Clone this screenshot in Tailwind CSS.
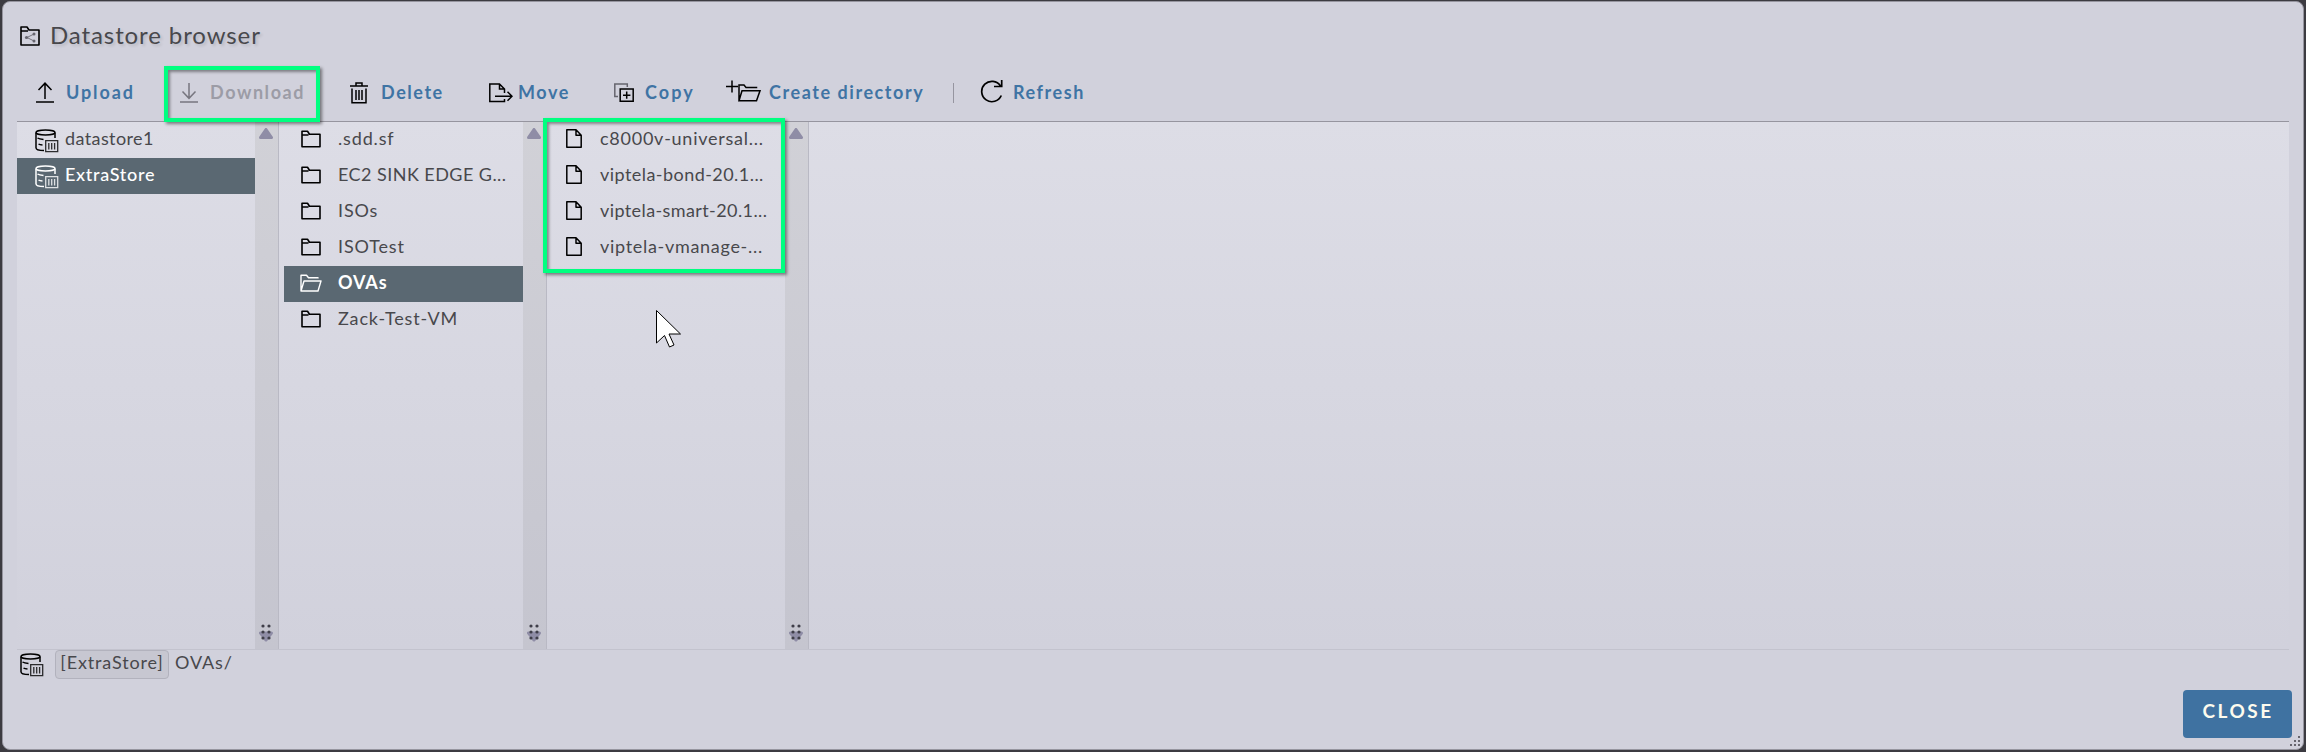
<!DOCTYPE html>
<html lang="en">
<head>
<meta charset="utf-8">
<title>Datastore browser</title>
<script src="https://cdn.jsdelivr.net/npm/@tailwindcss/browser@4"></script>
</head>
<body class="h-[752px] w-[2306px] overflow-hidden bg-[#3c3b41] font-['Lato','Noto_Sans',sans-serif] text-[18px] text-[#48484c]">
<svg class="hidden">
  <defs>
    <symbol id="db" viewBox="0 0 24 24"><g fill="none" stroke="currentColor" stroke-width="1.500"><path d="M20 9V3.800M1 3.800v14.900c0 1.700 3.500 2.800 8 2.800M2.500 9c1.500 1 3.500 1.300 6 1.500M3.500 15c1 .7 2.500.9 4 1"/><ellipse cx="10.500" cy="3.500" rx="9.500" ry="2.500"/></g><g fill="none" stroke="currentColor" stroke-width="1.300" opacity=".8"><path d="M10.700 11.700h12v11h-12zM13.800 14v6.500M16.700 14v6.500M19.600 14v6.500"/></g></symbol>
    <symbol id="folder" viewBox="0 0 20 18"><path d="M1 16.700V1.200h5.500l2 3H19v12.500zM1 5h6.500" fill="none" stroke="currentColor" stroke-width="1.600" stroke-linejoin="round"/></symbol>
    <symbol id="open" viewBox="0 0 22 18"><path d="M1 17V1.200h5.500l2 2.500H18v.8M1 17h17L21 7H4z" fill="none" stroke="currentColor" stroke-width="1.400" stroke-linejoin="round"/></symbol>
    <symbol id="file" viewBox="0 0 16 19"><path d="M.8.8H10l5.200 5.500v11.900H.8zM10 .8v5.500h5.200" fill="none" stroke="currentColor" stroke-width="1.500" stroke-linejoin="round"/></symbol>
    <symbol id="up" viewBox="0 0 14 11"><path d="M7 1.500 12.500 9.500h-11z" fill="#8f8da6" stroke="#8f8da6" stroke-width="3" stroke-linejoin="round"/></symbol>
    <symbol id="grip" viewBox="0 0 14 18"><path d="M1.500 9h11L7 16z" fill="#8f8da6" stroke="#8f8da6" stroke-width="3" stroke-linejoin="round"/><g fill="#3f3e49"><circle cx="4" cy="2" r="1.600"/><circle cx="10" cy="2" r="1.600"/><circle cx="4" cy="8" r="1.600"/><circle cx="10" cy="8" r="1.600"/><circle cx="4" cy="14" r="1.600"/><circle cx="10" cy="14" r="1.600"/></g></symbol>
  </defs>
</svg>
<main class="relative flex h-[752px] flex-col p-[2px] pt-px">
<div class="flex h-[750px] flex-col rounded-lg border border-[#96959f] bg-[#d1d1dc] px-[14px]">
  <header class="flex h-[54px] items-center pt-[14px] pl-[3px]">
    <svg class="h-5 w-5 text-black" viewBox="0 0 20 20" fill="none" stroke="currentColor"><path d="M1 19V1h6l2 3h10v15zM1 5h7" stroke-width="1.600" stroke-linejoin="round"/><path d="M14 8 7 11.500l7 3.500" stroke="#77767f"/><g fill="#66656e" stroke="none"><circle cx="14" cy="8" r="1.500"/><circle cx="6.500" cy="11.500" r="1.600"/><circle cx="14" cy="15" r="1.500"/></g></svg>
    <h1 class="ml-[10px] pb-[2px] text-[24px] leading-[30px] tracking-[.9px] text-[#48484c] [text-shadow:2px_2px_3px_rgba(0,0,0,.12)]">Datastore browser</h1>
  </header>
  <nav class="flex h-[65px] items-center pt-[8px] font-bold tracking-[1.560px] text-[#3f74a4]">
    <button class="flex w-[144px] items-center pl-[19px]"><svg class="mr-[12px] h-[21px] w-[18px] text-black" viewBox="0 0 18 21" fill="none" stroke="currentColor" stroke-width="1.500"><path d="M0 20h18M9 17V1M2.500 8 9 1.200 15.500 8"/></svg><span class="tracking-[1.900px]">Upload</span></button>
    <button class="flex w-[170px] items-center pl-[19px] text-[#9c9ca6]"><svg class="mr-[12px] h-[21px] w-[18px] text-[#77767f]" viewBox="0 0 18 21" fill="none" stroke="currentColor" stroke-width="1.500"><path d="M0 20h18M9 1v15M2.500 9.500 9 16.300l6.500-6.800"/></svg>Download</button>
    <button class="flex w-[139px] items-center pl-[19px]"><svg class="mr-[13px] h-[22px] w-[18px] text-black" viewBox="0 0 18 22" fill="none" stroke="currentColor" stroke-width="1.500"><path d="M0 4h18M6 4V1h6v3M2 6.500V20.800h14V6.500M6 8v10M9 8v10M12 8v10"/></svg>Delete</button>
    <button class="flex w-[144px] items-center pl-[19px]"><svg class="mr-[5px] h-[20px] w-[24px] text-black" viewBox="0 0 24 20" fill="none" stroke="currentColor" stroke-width="1.500"><path d="M15.500 10V6L10.500 1H.8v17.500h14.700V16M10.500 1v5h5M6 13.300h17M18.500 8.800l4.500 4.500-4.500 4.500"/></svg>Move</button>
    <button class="flex w-[112px] items-center"><svg class="mr-[11px] h-[19px] w-[20px] text-black" viewBox="0 0 20 19" fill="none" stroke="currentColor" stroke-width="1.500"><path d="M4 13.500H.8V1h12.500v3" stroke="#66656e"/><path d="M6.200 6h13v12.300h-13zM12.700 8.500v7.300M9 12.200h7.400"/></svg><span class="tracking-[2.100px]">Copy</span></button>
    <button class="flex w-[227px] items-center"><svg class="mr-[8px] mb-[3px] h-[22px] w-[35px] text-black" viewBox="0 0 35 22" fill="none" stroke="currentColor" stroke-width="1.500"><path d="M0 6.500h12M6 .5v12"/><path d="M13 20.800V5h5l2 2.500h10.500v.8M13 20.800h17.500l3.500-10H16z"/></svg>Create directory</button>
    <span class="h-5 w-px bg-[#9695a0]"></span>
    <button class="ml-[26px] flex items-center"><svg class="mr-[10px] mb-[3px] h-[23px] w-[23px] text-black" viewBox="0 0 23 23" fill="none" stroke="currentColor" stroke-width="1.700"><path d="M21.300 15.500A10.200 10.200 0 1 1 20.500 6M21.700 0v6.500H14"/></svg>Refresh</button>
  </nav>
  <section class="flex h-[529px] w-[2272px] border-y border-t-[#96959f] border-b-[#c3c3ce] bg-linear-to-b from-[#dddde6] to-[#d1d1dc]">
    <div class="flex w-[262px] border-r border-[#b9b9c4]">
      <ul class="w-[238px]">
        <li class="flex h-9 items-center pb-[4px] pl-[18px]"><svg class="mt-[5px] mr-[6px] h-6 w-6 text-black"><use href="#db"/></svg><span class="tracking-[.400px]">datastore1</span></li>
        <li class="flex h-9 items-center bg-[#5a6872] pb-[4px] pl-[18px] text-white"><svg class="mt-[5px] mr-[6px] h-6 w-6"><use href="#db"/></svg><span class="font-medium tracking-[.700px]">ExtraStore</span></li>
      </ul>
      <div class="flex w-[23px] flex-col items-center justify-between bg-linear-to-b from-[#d1d1d7] to-[#c5c5cf] pt-[6px] pr-px pb-[7px]"><svg class="h-[11px] w-[14px]"><use href="#up"/></svg><svg class="h-[18px] w-[14px]"><use href="#grip"/></svg></div>
    </div>
    <div class="flex w-[268px] border-r border-[#b9b9c4] pl-[5px]">
      <ul class="w-[239px] tracking-[.850px]">
        <li class="flex h-9 items-center pb-[4px] pl-[16px]"><svg class="mt-px mr-[16px] h-[18px] w-[22px] text-black"><use href="#folder"/></svg>.sdd.sf</li>
        <li class="flex h-9 items-center pb-[4px] pl-[16px]"><svg class="mt-px mr-[16px] h-[18px] w-[22px] text-black"><use href="#folder"/></svg><span class="tracking-[.450px]">EC2 SINK EDGE G...</span></li>
        <li class="flex h-9 items-center pb-[4px] pl-[16px]"><svg class="mt-px mr-[16px] h-[18px] w-[22px] text-black"><use href="#folder"/></svg>ISOs</li>
        <li class="flex h-9 items-center pb-[4px] pl-[16px]"><svg class="mt-px mr-[16px] h-[18px] w-[22px] text-black"><use href="#folder"/></svg>ISOTest</li>
        <li class="flex h-9 items-center bg-[#5a6872] pb-[4px] pl-[16px] font-bold text-white"><svg class="mt-px mr-[16px] h-[18px] w-[22px]"><use href="#open"/></svg>OVAs</li>
        <li class="flex h-9 items-center pb-[4px] pl-[16px]"><svg class="mt-px mr-[16px] h-[18px] w-[22px] text-black"><use href="#folder"/></svg>Zack-Test-VM</li>
      </ul>
      <div class="flex w-[23px] flex-col items-center justify-between bg-linear-to-b from-[#d1d1d7] to-[#c5c5cf] pt-[6px] pr-px pb-[7px]"><svg class="h-[11px] w-[14px]"><use href="#up"/></svg><svg class="h-[18px] w-[14px]"><use href="#grip"/></svg></div>
    </div>
    <div class="flex w-[262px] border-r border-[#b9b9c4]">
      <ul class="w-[238px]">
        <li class="flex h-9 items-center pb-[4px] pl-[19px]"><svg class="mt-px mr-[18px] h-[19px] w-[16px] text-black"><use href="#file"/></svg><span class="tracking-[.750px]">c8000v-universal...</span></li>
        <li class="flex h-9 items-center pb-[4px] pl-[19px]"><svg class="mt-px mr-[18px] h-[19px] w-[16px] text-black"><use href="#file"/></svg><span class="tracking-[.450px]">viptela-bond-20.1...</span></li>
        <li class="flex h-9 items-center pb-[4px] pl-[19px]"><svg class="mt-px mr-[18px] h-[19px] w-[16px] text-black"><use href="#file"/></svg><span class="tracking-[.400px]">viptela-smart-20.1...</span></li>
        <li class="flex h-9 items-center pb-[4px] pl-[19px]"><svg class="mt-px mr-[18px] h-[19px] w-[16px] text-black"><use href="#file"/></svg><span class="tracking-[.700px]">viptela-vmanage-...</span></li>
      </ul>
      <div class="flex w-[23px] flex-col items-center justify-between bg-linear-to-b from-[#d1d1d7] to-[#c5c5cf] pt-[6px] pr-px pb-[7px]"><svg class="h-[11px] w-[14px]"><use href="#up"/></svg><svg class="h-[18px] w-[14px]"><use href="#grip"/></svg></div>
    </div>
  </section>
  <div class="flex h-[28px] items-center pl-[3px] tracking-[.850px]">
    <svg class="mt-[2px] mr-[11px] h-6 w-6 text-black"><use href="#db"/></svg>
    <span class="flex h-[29px] w-[114px] items-center justify-center rounded-[4px] border border-[#b2b2bd] bg-[#c7c7d1] pb-[4px]">[ExtraStore]</span>
    <span class="ml-[6px] pb-[4px]">OVAs/</span>
  </div>
  <footer class="-mr-[3px] mt-[12px] flex justify-end">
    <button class="h-12 w-[109px] rounded-[4px] bg-[#3f72a1] pb-[5px] pl-[1px] text-[19px] font-bold tracking-[2.500px] text-[#fdfbee]">CLOSE</button>
  </footer>
</div>
<div class="absolute top-[66px] left-[164px] h-[56px] w-[156px] border-4 border-[#00ff80] shadow-[2px_2px_3px_rgba(0,0,0,.45),inset_2px_2px_3px_rgba(0,0,0,.4)]"></div>
<div class="absolute top-[118px] left-[543px] h-[155px] w-[242px] border-4 border-[#00ff80] shadow-[2px_2px_3px_rgba(0,0,0,.45),inset_2px_2px_3px_rgba(0,0,0,.4)]"></div>
<svg class="absolute top-[309px] left-[655px] h-[40px] w-[28px]" viewBox="0 0 28 40"><path d="M1.500 1.500v32.500l8-7.500 5 11.500 4.500-2-5-11H25.500z" fill="#fff" stroke="#000"/></svg>
<svg class="absolute top-[735px] left-[2289px] h-[12px] w-[12px]" viewBox="0 0 12 12" fill="#66656e"><path d="M9 1h2v2H9zM9 5h2v2H9zM5 5h2v2H5zM1 9h2v2H1zM5 9h2v2H5zM9 9h2v2H9z"/></svg>
</main>
</body>
</html>
